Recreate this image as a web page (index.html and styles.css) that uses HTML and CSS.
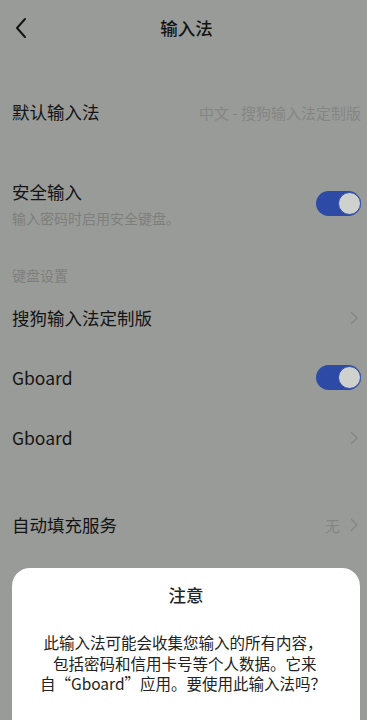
FILE: index.html
```html
<!DOCTYPE html>
<html lang="zh-CN">
<head>
<meta charset="utf-8">
<link rel="stylesheet" href="styles.css">
</head>
<body>
<div class="page">
  <header class="header">
    <span class="back">
      <svg width="14" height="22" viewBox="0 0 14 22"><path d="M11 2 L3 11 L11 20" fill="none" stroke="#141414" stroke-width="2" stroke-linecap="round" stroke-linejoin="round"/></svg>
    </span>
    <span class="title">输入法</span>
  </header>

  <div class="row row-default">
    <span class="label">默认输入法</span>
    <span class="value">中文 - 搜狗输入法定制版</span>
  </div>

  <div class="row-secure">
    <div class="texts">
      <div class="label">安全输入</div>
      <div class="sub">输入密码时启用安全键盘。</div>
    </div>
    <span class="toggle"><span class="knob"></span></span>
  </div>

  <div class="section">键盘设置</div>

  <div class="row row-ime">
    <span class="label">搜狗输入法定制版</span>
    <span class="chev"><svg width="9" height="14" viewBox="0 0 9 14"><path d="M1.5 1.5 L7 7 L1.5 12.5" fill="none" stroke="#858784" stroke-width="1.4" stroke-linecap="round" stroke-linejoin="round"/></svg></span>
  </div>
  <div class="row row-ime">
    <span class="label">Gboard</span>
    <span class="toggle"><span class="knob"></span></span>
  </div>
  <div class="row row-ime">
    <span class="label">Gboard</span>
    <span class="chev"><svg width="9" height="14" viewBox="0 0 9 14"><path d="M1.5 1.5 L7 7 L1.5 12.5" fill="none" stroke="#858784" stroke-width="1.4" stroke-linecap="round" stroke-linejoin="round"/></svg></span>
  </div>

  <div class="row row-autofill">
    <span class="label">自动填充服务</span>
    <span class="right">
      <span class="value">无</span>
      <span class="chev"><svg width="9" height="14" viewBox="0 0 9 14"><path d="M1.5 1.5 L7 7 L1.5 12.5" fill="none" stroke="#858784" stroke-width="1.4" stroke-linecap="round" stroke-linejoin="round"/></svg></span>
    </span>
  </div>
</div>

<div class="sheet">
  <div class="sheet-title">注意</div>
  <div class="sheet-body">此输入法可能会收集您输入的所有内容，<br>&nbsp;包括密码和信用卡号等个人数据。它来<br>自“Gboard”应用。要使用此输入法吗？</div>
</div>
</body>
</html>
```

FILE: styles.css
```css
html, body {
  margin: 0;
  padding: 0;
}
body {
  width: 367px;
  height: 720px;
  overflow: hidden;
  background: #999b98;
  font-family: "Noto Sans CJK SC", "Noto Sans", sans-serif;
  color: #141414;
  position: relative;
}
.page {
  padding: 0 6px 0 12px;
}
.header {
  height: 54px;
  display: flex;
  align-items: center;
  justify-content: center;
  position: relative;
}
.back {
  position: absolute;
  left: 2px;
  top: 17px;
  display: flex;
}
.title {
  font-size: 17.5px;
  font-weight: 500;
}
.row {
  display: flex;
  align-items: center;
  justify-content: space-between;
}
.label {
  font-size: 17.5px;
  line-height: 24px;
}
.value {
  font-size: 15px;
  color: #848683;
}
.row-default {
  margin-top: 30px;
  height: 56px;
}
.row-secure {
  display: flex;
  align-items: center;
  justify-content: space-between;
  padding-top: 40px;
}
.texts {
  display: flex;
  flex-direction: column;
  gap: 4px;
}
.sub {
  font-size: 14px;
  line-height: 20px;
  color: #7d7f7c;
}
.toggle {
  width: 45px;
  height: 25px;
  border-radius: 13px;
  background: #2d4ba6;
  display: flex;
  align-items: center;
  justify-content: flex-end;
  box-sizing: border-box;
  margin-top: -2px;
}
.knob {
  width: 23px;
  height: 23px;
  border-radius: 50%;
  background: #cfd1ce;
  border: 1px solid #2d4ba6;
  box-sizing: border-box;
}
.section {
  margin-top: 37px;
  font-size: 14px;
  line-height: 20px;
  color: #7d7f7c;
  height: 23px;
}
.row-ime {
  height: 60px;
}
.chev {
  display: flex;
  margin-right: 2px;
}
.row-autofill {
  margin-top: 29px;
  height: 56px;
}
.right {
  display: flex;
  align-items: center;
  gap: 10px;
}
.sheet {
  position: absolute;
  left: 12px;
  right: 7px;
  top: 568px;
  height: 170px;
  background: #ffffff;
  border-radius: 18px;
  color: #222222;
  text-align: center;
  padding-top: 15px;
  box-sizing: border-box;
}
.sheet-title {
  font-size: 17.5px;
  font-weight: 500;
  line-height: 24px;
}
.sheet-body {
  margin-top: 25px;
  font-size: 15.5px;
  line-height: 20.5px;
  white-space: nowrap;
  padding-right: 6px;
}
```
